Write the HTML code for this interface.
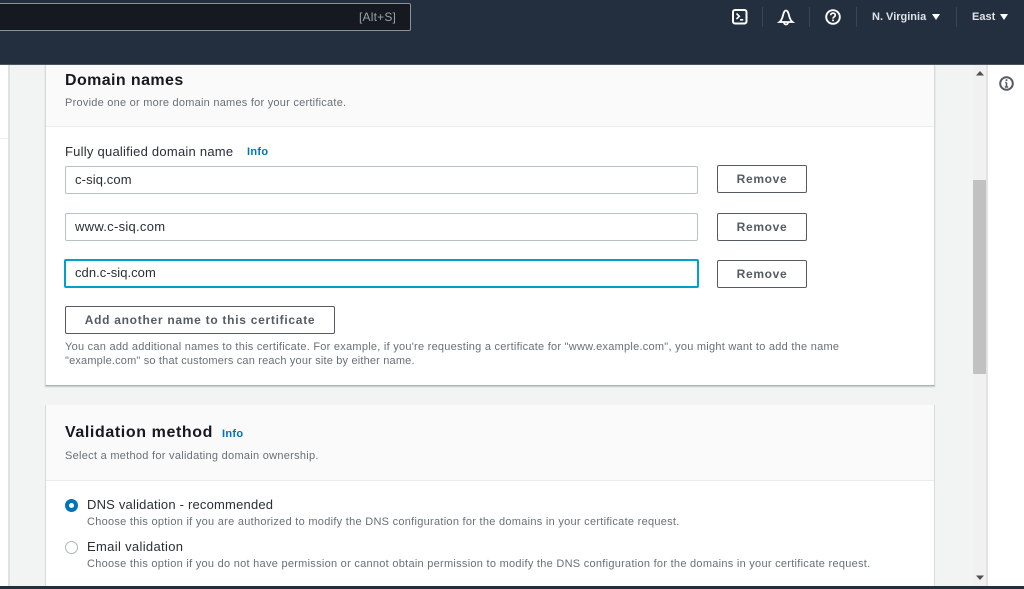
<!DOCTYPE html>
<html><head><meta charset="utf-8">
<style>
html,body{margin:0;padding:0;width:1024px;height:589px;overflow:hidden;background:#fff}
body{position:relative;font-family:"Liberation Sans",sans-serif;color:#16191f}
.a{position:absolute}
.t{position:absolute;white-space:nowrap;line-height:16px}
.desc{font-size:11px;color:#687078;letter-spacing:.24px}
.lab{font-size:13px;color:#16191f;letter-spacing:.2px}
.inp{position:absolute;left:65px;width:631px;height:26px;border:1px solid #b7c2c3;border-radius:2px;background:#fff}
.val{position:absolute;left:75px;font-size:13px;color:#2a2f36;letter-spacing:.12px;line-height:16px;white-space:nowrap}
.btn{position:absolute;box-sizing:border-box;border:1px solid #545b64;border-radius:2px;background:#fff;color:#545b64;font-weight:bold;font-size:12px;letter-spacing:.66px;text-align:center}
.info{position:absolute;font-size:11px;font-weight:bold;color:#0073bb;letter-spacing:.3px;line-height:14px}
.sep{position:absolute;top:7px;width:1px;height:20px;background:#3a4553}
</style></head><body>
<div class="a" style="left:0;top:0;width:1024px;height:65px;background:#232f3e;border-bottom:1px solid #4a5563;box-sizing:border-box"></div>
<div class="a" style="left:-2px;top:3px;width:413px;height:28px;background:#16191f;border:1px solid #879596;border-radius:2px;box-sizing:border-box"></div>
<div class="t" style="left:359px;top:9px;font-size:12px;color:#95a5a6;letter-spacing:.2px">[Alt+S]</div>

<svg class="a" style="left:730px;top:7px" width="20" height="20" viewBox="0 0 20 20" fill="none" stroke="#fff" stroke-width="2"><rect x="3" y="3" width="13.500" height="13.500" rx="2"/><path d="M6.500 6.500l2.800 2.800-2.800 2.800" stroke-width="1.600"/><path d="M10 12.800h3.200" stroke-width="1.600"/></svg>
<div class="sep" style="left:762px"></div>
<svg class="a" style="left:776px;top:7px" width="20" height="20" viewBox="0 0 20 20" fill="none" stroke="#fff" stroke-width="1.800"><path d="M3.500 15h13c-1.500-1.200-2.500-3-3.200-5.500-.6-2.300-1.300-6-3.300-6s-2.700 3.700-3.300 6C6 12 5 13.800 3.500 15z"/><path d="M8 15.500a2 2 0 0 0 4 0"/></svg>
<div class="sep" style="left:809px"></div>
<svg class="a" style="left:823px;top:7px" width="20" height="20" viewBox="0 0 20 20" fill="none" stroke="#fff" stroke-width="1.900"><circle cx="10" cy="10" r="6.800"/><path d="M7.700 8.300c0-1.400 1-2.200 2.300-2.200s2.300.8 2.300 2c0 1.900-2.300 1.700-2.300 3.500" stroke-width="1.700"/><path d="M10 12.500v1.700" stroke-width="1.700"/></svg>
<div class="sep" style="left:856px"></div>
<div class="t" style="left:872px;top:9px;font-size:11px;font-weight:bold;color:#dfe3e7;letter-spacing:0">N. Virginia</div>
<svg class="a" style="left:932px;top:14px" width="8" height="6"><path d="M0 0h8L4 6z" fill="#fff"/></svg>
<div class="sep" style="left:956px"></div>
<div class="t" style="left:972px;top:9px;font-size:11px;font-weight:bold;color:#dfe3e7;letter-spacing:0">East</div>
<svg class="a" style="left:1000px;top:14px" width="8" height="6"><path d="M0 0h8L4 6z" fill="#fff"/></svg>

<!-- page background -->
<div class="a" style="left:8px;top:65px;width:979px;height:521px;background:#f2f3f3"></div>
<div class="a" style="left:8px;top:65px;width:2px;height:521px;background:#dfe2e2"></div>
<div class="a" style="left:0;top:138px;width:8px;height:1px;background:#eaeded"></div>
<!-- scrollbar -->
<div class="a" style="left:973px;top:65px;width:14px;height:521px;background:#f1f1f1"></div>
<div class="a" style="left:986px;top:65px;width:2px;height:521px;background:#e2e4e4"></div>
<div class="a" style="left:973px;top:180px;width:13px;height:194px;background:#c1c1c1"></div>
<svg class="a" style="left:976px;top:71px" width="8" height="5"><path d="M4 0l4 4.500H0z" fill="#505050"/></svg>
<svg class="a" style="left:976px;top:575px" width="8" height="5"><path d="M4 5L8 .5H0z" fill="#505050"/></svg>

<svg class="a" style="left:998px;top:75px" width="17" height="17" viewBox="0 0 17 17" fill="none" stroke="#545b64" stroke-width="2"><circle cx="8.500" cy="8.500" r="6.300"/><path d="M8.500 7.500v4M6.800 12h3.400M7.200 7.500h1.300" stroke-width="1.600"/><path d="M8.500 4.300v1.700" stroke-width="1.800"/></svg>

<!-- card 1 -->
<div class="a" style="left:45px;top:65px;width:890px;height:321px;background:#fff;border-left:1px solid #d5dbdb;border-right:1px solid #d5dbdb;border-bottom:1px solid #aab7b8;box-sizing:border-box;box-shadow:0 1px 1px rgba(0,28,36,.2)"></div>
<div class="a" style="left:46px;top:65px;width:888px;height:62px;background:#fafafa;border-bottom:1px solid #eaeded;box-sizing:border-box"></div>
<div class="t" style="left:65px;top:72px;font-size:16px;font-weight:bold;letter-spacing:.4px;line-height:18px">Domain names</div>
<div class="t desc" style="left:65px;top:95px">Provide one or more domain names for your certificate.</div>
<div class="t lab" style="left:65px;top:144px;color:#2a2f36;letter-spacing:.24px">Fully qualified domain name</div>
<div class="info" style="left:247px;top:145px">Info</div>

<div class="inp" style="top:166px"></div><div class="val" style="top:172px">c-siq.com</div>
<div class="inp" style="top:213px"></div><div class="val" style="top:219px;letter-spacing:.28px">www.c-siq.com</div>
<div class="inp" style="top:259px;left:64px;border:2px solid #00a1c9;box-sizing:content-box;width:631px;height:25px"></div><div class="val" style="top:265px;letter-spacing:.05px">cdn.c-siq.com</div>

<div class="btn" style="left:717px;top:165px;width:90px;height:28px;line-height:26px">Remove</div>
<div class="btn" style="left:717px;top:213px;width:90px;height:28px;line-height:26px">Remove</div>
<div class="btn" style="left:717px;top:260px;width:90px;height:28px;line-height:26px">Remove</div>
<div class="btn" style="left:65px;top:306px;width:270px;height:28px;line-height:27px;letter-spacing:.72px">Add another name to this certificate</div>
<div class="t desc" style="left:65px;top:339px;letter-spacing:.254px">You can add additional names to this certificate. For example, if you're requesting a certificate for "www.example.com", you might want to add the name</div>
<div class="t desc" style="left:65px;top:353px;letter-spacing:.175px">"example.com" so that customers can reach your site by either name.</div>

<!-- card 2 -->
<div class="a" style="left:45px;top:405px;width:890px;height:181px;background:#fff;border-left:1px solid #d5dbdb;border-right:1px solid #d5dbdb;box-sizing:border-box"></div>
<div class="a" style="left:46px;top:405px;width:888px;height:76px;background:#fafafa;border-bottom:1px solid #eaeded;box-sizing:border-box"></div>
<div class="t" style="left:65px;top:423px;font-size:16px;font-weight:bold;letter-spacing:.6px;line-height:20px">Validation method</div>
<div class="info" style="left:222px;top:427px">Info</div>
<div class="t desc" style="left:65px;top:448px;letter-spacing:.28px">Select a method for validating domain ownership.</div>

<div class="a" style="left:65px;top:499px;width:13px;height:13px;border-radius:50%;border:4px solid #0073bb;background:#fff;box-sizing:border-box"></div>
<div class="t lab" style="left:87px;top:497px;color:#2a2f36;letter-spacing:.2px">DNS validation - recommended</div>
<div class="t desc" style="left:87px;top:514px;letter-spacing:.278px">Choose this option if you are authorized to modify the DNS configuration for the domains in your certificate request.</div>
<div class="a" style="left:65px;top:541px;width:13px;height:13px;border-radius:50%;border:1px solid #aab7b8;background:#fff;box-sizing:border-box"></div>
<div class="t lab" style="left:87px;top:539px;color:#2a2f36;letter-spacing:.33px">Email validation</div>
<div class="t desc" style="left:87px;top:556px;letter-spacing:.273px">Choose this option if you do not have permission or cannot obtain permission to modify the DNS configuration for the domains in your certificate request.</div>

<div class="a" style="left:0;top:586px;width:1024px;height:3px;background:#232f3e"></div>
</body></html>
